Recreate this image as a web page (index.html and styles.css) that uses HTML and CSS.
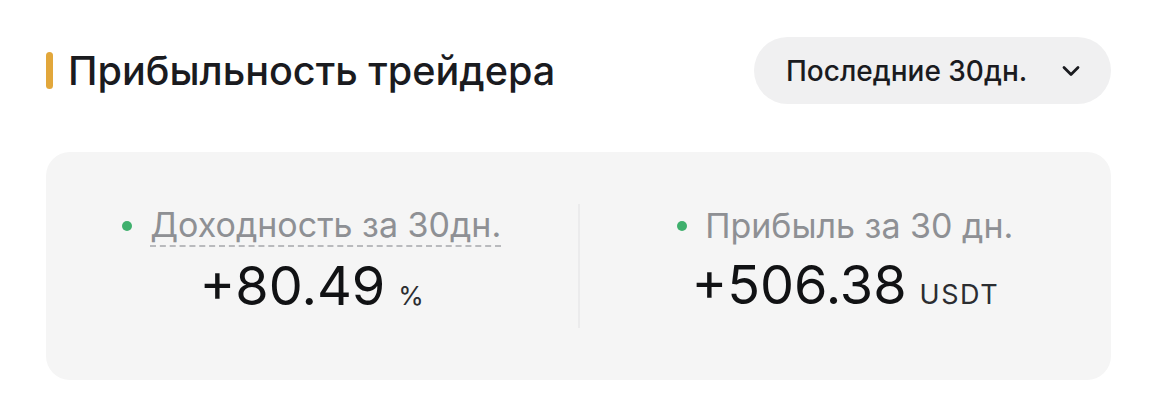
FILE: index.html
```html
<!DOCTYPE html>
<html lang="ru">
<head>
<meta charset="utf-8">
<title>Прибыльность трейдера</title>
<link rel="stylesheet" href="styles.css">
</head>
<body>
<section class="panel">
  <header class="panel-head">
    <h2 class="panel-title"><span class="accent"></span>Прибыльность трейдера</h2>
    <button class="period" type="button">
      <span>Последние 30дн.</span>
      <svg class="chev" width="18" height="12" viewBox="0 0 18 12" aria-hidden="true">
        <path d="M2 2.5 L9 9.5 L16 2.5" fill="none" stroke="#1a1b1f" stroke-width="2.8" stroke-linecap="round" stroke-linejoin="round"/>
      </svg>
    </button>
  </header>
  <div class="stats">
    <div class="stat">
      <div class="stat-label"><i class="dot"></i><span class="hint">Доходность за 30дн.</span></div>
      <div class="stat-value">+80.49<small class="unit">%</small></div>
    </div>
    <div class="divider"></div>
    <div class="stat">
      <div class="stat-label"><i class="dot"></i><span>Прибыль за 30 дн.</span></div>
      <div class="stat-value">+506.38<small class="unit unit-wide">USDT</small></div>
    </div>
  </div>
</section>
</body>
</html>
```

FILE: styles.css
```css
* { box-sizing: border-box; }

html, body {
  margin: 0;
  background: #ffffff;
}

body {
  font-family: Inter, "Noto Sans", "Liberation Sans", sans-serif;
  color: #1a1b1f;
}

.panel {
  width: 1152px;
  height: 404px;
  padding: 37px 41px 0 46px;
}

.panel-head {
  display: flex;
  align-items: center;
  justify-content: space-between;
  height: 67px;
}

.panel-title {
  display: flex;
  align-items: center;
  margin: 0;
  font-size: 39.6px;
  font-weight: 500;
  letter-spacing: 0;
  color: #1a1b1f;
}

.accent {
  display: block;
  width: 7px;
  height: 37px;
  border-radius: 4px;
  background: #e2a73b;
  margin-right: 15px;
}

.period {
  display: flex;
  align-items: center;
  gap: 35px;
  height: 67px;
  width: 357px;
  padding: 0 28px 0 32px;
  border: 0;
  border-radius: 34px;
  background: #f0f0f1;
  font-family: inherit;
  font-size: 28px;
  font-weight: 500;
  color: #1a1b1f;
  cursor: pointer;
}

.chev { display: block; }

.stats {
  display: flex;
  align-items: center;
  margin-top: 48px;
  height: 228px;
  border-radius: 24px;
  background: #f5f5f5;
}

.stat {
  flex: 1;
  display: flex;
  flex-direction: column;
  align-items: center;
}

.stat-label {
  display: flex;
  align-items: center;
  gap: 18px;
  font-size: 34px;
  font-weight: 400;
  color: #8e9094;
  line-height: 40px;
}

.dot {
  display: block;
  width: 10px;
  height: 10px;
  border-radius: 50%;
  background: #3fb06d;
}

.hint {
  border-bottom: 2px dashed #b9babd;
  line-height: 40px;
}

.stat-value {
  display: flex;
  align-items: baseline;
  margin-top: 8px;
  font-size: 54px;
  font-weight: 400;
  line-height: 62px;
  color: #111214;
}

.unit {
  margin-left: 13px;
  font-size: 26px;
  font-weight: 400;
  color: #2b2d31;
}

.unit-wide {
  font-size: 27px;
  letter-spacing: 1.5px;
}

.divider {
  width: 2px;
  height: 124px;
  background: #ebebec;
}
```
